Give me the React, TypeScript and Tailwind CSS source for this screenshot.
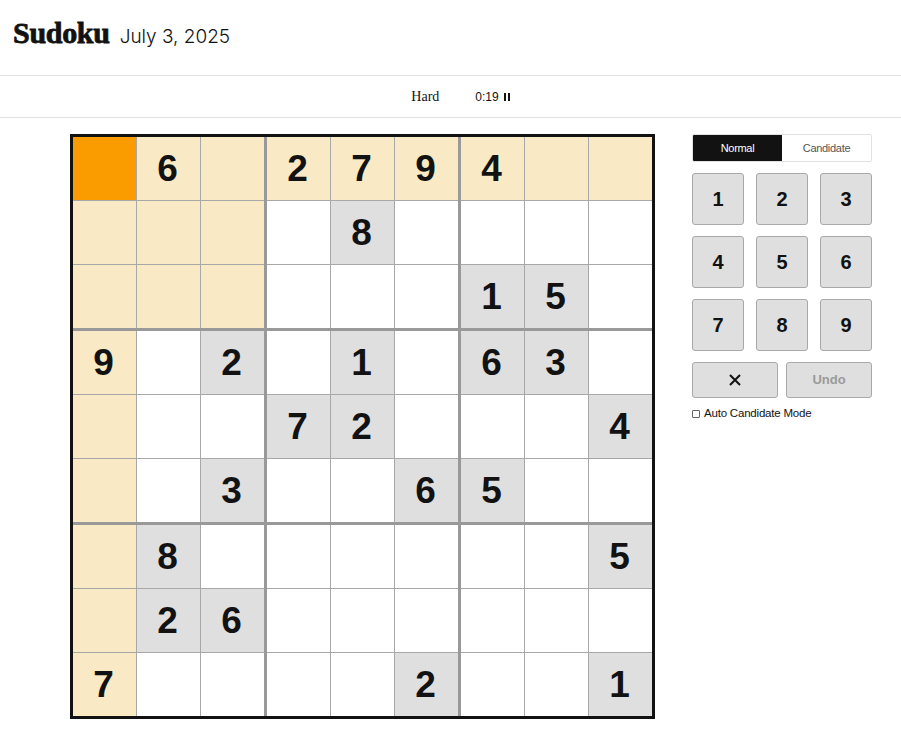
import React from "react";

const puzzle: (number | null)[][] = [
  [null, 6, null, 2, 7, 9, 4, null, null],
  [null, null, null, null, 8, null, null, null, null],
  [null, null, null, null, null, null, 1, 5, null],
  [9, null, 2, null, 1, null, 6, 3, null],
  [null, null, null, 7, 2, null, null, null, 4],
  [null, null, 3, null, null, 6, 5, null, null],
  [null, 8, null, null, null, null, null, null, 5],
  [null, 2, 6, null, null, null, null, null, null],
  [7, null, null, null, null, 2, null, null, 1],
];

function Cell({ r, c }: { r: number; c: number }) {
  const v = puzzle[r][c];
  const selected = r === 0 && c === 0;
  const highlighted = r === 0 || c === 0 || (r < 3 && c < 3);
  let bg = "bg-white";
  if (selected) bg = "bg-[#fa9b00]";
  else if (highlighted) bg = "bg-[#f9e9c4]";
  else if (v !== null) bg = "bg-[#dfdfdf]";
  return (
    <div
      className={`${bg} flex items-center justify-center pr-[2px] text-[37px] font-bold text-[#121212] leading-none`}
      style={{ fontFamily: '"Liberation Sans", Arial, sans-serif' }}
    >
      {v ?? ""}
    </div>
  );
}

function Box({ br, bc }: { br: number; bc: number }) {
  const cells = [];
  for (let i = 0; i < 3; i++) {
    for (let j = 0; j < 3; j++) {
      cells.push(<Cell key={`${i}-${j}`} r={br * 3 + i} c={bc * 3 + j} />);
    }
  }
  return (
    <div className="grid grid-cols-3 grid-rows-3 gap-px bg-[#a8a8a8]">{cells}</div>
  );
}

export default function App() {
  const sans = { fontFamily: '"Liberation Sans", Arial, sans-serif' };
  return (
    <div className="w-[901px] h-[745px] bg-white overflow-hidden" style={sans}>
      {/* Header */}
      <div className="h-[76px] border-b border-[#e2e2e2] flex items-center pl-[13px] pb-[10px]">
        <div className="flex items-baseline gap-[10px]">
          <span
            className="text-[30px] font-bold text-[#121212] tracking-[-0.3px]"
            style={{ fontFamily: '"Liberation Serif", serif', WebkitTextStroke: "0.8px #121212" }}
          >
            Sudoku
          </span>
          <span
            className="text-[19px] font-light text-[#121212]"
            style={{ fontFamily: 'Inter, "Liberation Sans", sans-serif' }}
          >
            July 3, 2025
          </span>
        </div>
      </div>
      {/* Toolbar */}
      <div className="h-[42px] border-b border-[#e2e2e2] flex items-center justify-center pl-[20px]">
        <span
          className="text-[14px] text-[#121212]"
          style={{ fontFamily: '"Liberation Serif", serif' }}
        >
          Hard
        </span>
        <span className="ml-[36px] text-[12px] text-[#121212]">0:19</span>
        <span className="ml-[5px] flex gap-[2px] items-center">
          <span className="w-[2px] h-[8px] bg-[#121212]" />
          <span className="w-[2px] h-[8px] bg-[#121212]" />
        </span>
      </div>
      {/* Main */}
      <div className="flex pt-[16px] pl-[70px]">
        <div className="w-[585px] h-[585px] border-[3px] border-[#121212]">
          <div className="w-full h-full grid grid-cols-3 grid-rows-3 gap-[3px] bg-[#999999]">
            {[0, 1, 2].map((br) =>
              [0, 1, 2].map((bc) => <Box key={`${br}-${bc}`} br={br} bc={bc} />)
            )}
          </div>
        </div>
        <div className="ml-[37px] w-[180px]">
          <div className="flex h-[28px] border border-[#e2e2e2] rounded-[2px] overflow-hidden">
            <div className="w-[89px] bg-[#121212] text-white text-[11px] flex items-center justify-center tracking-[-0.3px]">
              Normal
            </div>
            <div className="flex-1 bg-white text-[#555] text-[11px] flex items-center justify-center tracking-[-0.3px]">
              Candidate
            </div>
          </div>
          <div className="mt-[11px] grid grid-cols-3 gap-x-[12px] gap-y-[11px] w-[180px]">
            {[1, 2, 3, 4, 5, 6, 7, 8, 9].map((n) => (
              <div
                key={n}
                className="h-[52px] bg-[#dfdfdf] border border-[#a9a9a9] rounded-[3px] flex items-center justify-center text-[20px] font-bold text-[#121212]"
              >
                {n}
              </div>
            ))}
          </div>
          <div className="mt-[11px] flex gap-[8px]">
            <div className="w-[86px] h-[36px] bg-[#dfdfdf] border border-[#a9a9a9] rounded-[3px] flex items-center justify-center">
              <svg width="14" height="14" viewBox="0 0 14 14">
                <path d="M2 2 L12 12 M12 2 L2 12" stroke="#121212" strokeWidth="2" />
              </svg>
            </div>
            <div className="flex-1 h-[36px] bg-[#dfdfdf] border border-[#a9a9a9] rounded-[3px] flex items-center justify-center text-[13px] font-bold text-[#9a9a9a]">
              Undo
            </div>
          </div>
          <label className="mt-[7px] flex items-center gap-[4px] text-[11.5px] text-[#121212] tracking-[-0.2px]">
            <span className="w-[8px] h-[8px] border border-[#666] rounded-[1px] bg-white" />
            Auto Candidate Mode
          </label>
        </div>
      </div>
    </div>
  );
}
